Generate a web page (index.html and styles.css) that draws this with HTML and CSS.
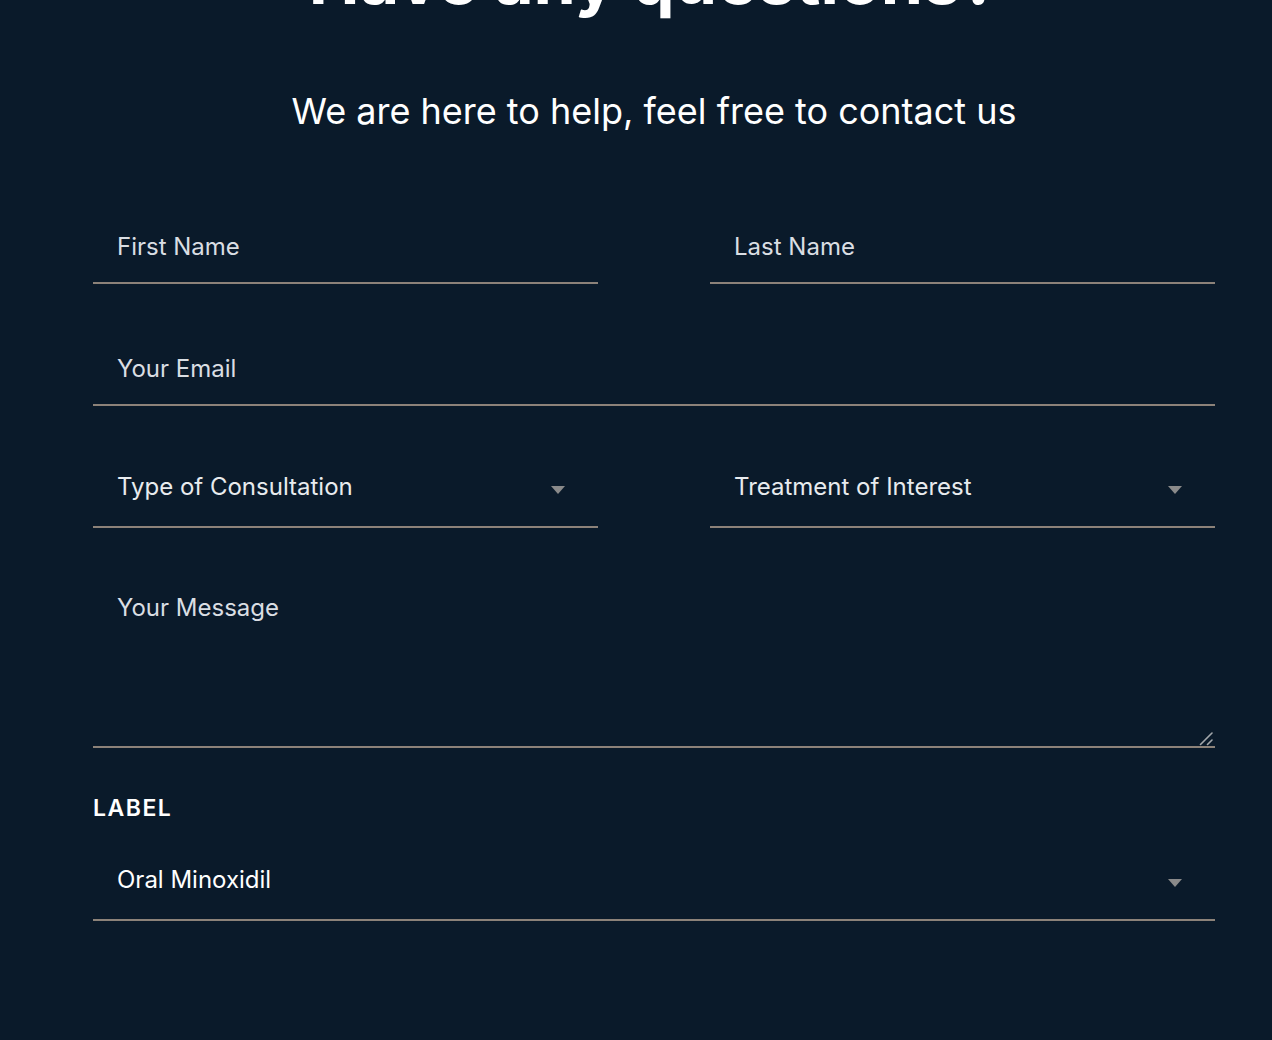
FILE: index.html
```html
<!DOCTYPE html>
<html lang="en">
<head>
    <meta charset="UTF-8">
    <meta name="viewport" content="width=device-width, initial-scale=1.0">
    <title>Contact</title>
    <link rel="stylesheet" href="styles.css">
</head>
<body>
    <section class="contact">
        <h1 class="contact-title">Have any questions?</h1>
        <p class="contact-subtitle">We are here to help, feel free to contact us</p>
        <form class="contact-form" onsubmit="return false">
            <div class="row two-cols">
                <input class="field" type="text" placeholder="First Name">
                <input class="field" type="text" placeholder="Last Name">
            </div>
            <div class="row">
                <input class="field" type="email" placeholder="Your Email">
            </div>
            <div class="row two-cols">
                <div class="select-wrap">
                    <select class="field select">
                        <option>Type of Consultation</option>
                        <option>In Person</option>
                        <option>Online</option>
                    </select>
                </div>
                <div class="select-wrap">
                    <select class="field select">
                        <option>Treatment of Interest</option>
                        <option>Hair Transplant</option>
                        <option>PRP</option>
                    </select>
                </div>
            </div>
            <div class="row">
                <div class="message-wrap">
                    <textarea class="field message" placeholder="Your Message"></textarea>
                    <svg class="grip" width="14" height="14" viewBox="0 0 14 14">
                        <path d="M1.5 12.5 L13 1 M8.5 12.5 L13 8" stroke="#a3a7ab" stroke-width="1.6" stroke-linecap="round" fill="none"/>
                    </svg>
                </div>
            </div>
            <div class="row labelled">
                <label class="field-label" for="treatment">LABEL</label>
                <div class="select-wrap">
                    <select class="field select value" id="treatment">
                        <option>Oral Minoxidil</option>
                        <option>Finasteride</option>
                    </select>
                </div>
            </div>
        </form>
    </section>
</body>
</html>
```

FILE: styles.css
```css
html {
    background-color: #0a1a2a;
}
body {
    font-family: Inter, "Noto Sans", Arial, sans-serif;
    background-color: #0a1a2a;
    color: #ffffff;
    margin: 0;
    padding: 0;
    min-height: 100vh;
}
.contact {
    padding: 0 57px 80px 93px;
}
.contact-title {
    margin: -61px 0 0;
    font-size: 68px;
    line-height: 1.2;
    font-weight: 700;
    text-align: center;
}
.contact-subtitle {
    margin: 69px 0 0;
    font-size: 36px;
    line-height: 1.2;
    font-weight: 400;
    text-align: center;
}
.contact-form {
    margin-top: 79px;
    display: flex;
    flex-direction: column;
    gap: 50px;
}
.row {
    display: flex;
}
.two-cols {
    display: grid;
    grid-template-columns: 1fr 1fr;
    column-gap: 112px;
}
.row > .field,
.row > .select-wrap,
.row > .message-wrap {
    width: 100%;
}
.field {
    display: block;
    width: 100%;
    height: 72px;
    box-sizing: border-box;
    margin: 0;
    padding: 0 24px;
    font-family: inherit;
    font-size: 24px;
    color: #ffffff;
    background: transparent;
    border: none;
    border-bottom: 2px solid #8c8279;
    border-radius: 0;
    outline: none;
}
.field::placeholder {
    color: #dadee3;
    opacity: 1;
}
.select-wrap {
    position: relative;
}
.select-wrap::after {
    content: "";
    position: absolute;
    right: 33px;
    top: 30px;
    border-left: 7.5px solid transparent;
    border-right: 7.5px solid transparent;
    border-top: 8px solid #8a8a8a;
    pointer-events: none;
}
.select {
    appearance: none;
    -webkit-appearance: none;
    padding: 0 60px 9px 24px;
    color: #e8ebee;
    cursor: pointer;
}
.select.value {
    color: #ffffff;
}
.select option {
    color: #000000;
}
.message-wrap {
    position: relative;
}
.message {
    height: 170px;
    padding-top: 15px;
    resize: none;
}
.grip {
    position: absolute;
    right: 2px;
    bottom: 2px;
    pointer-events: none;
}
.labelled {
    flex-direction: column;
    margin-top: -3px;
}
.field-label {
    font-size: 23px;
    line-height: 1.2;
    font-weight: 600;
    letter-spacing: 1.5px;
    margin-bottom: 27px;
}
```
